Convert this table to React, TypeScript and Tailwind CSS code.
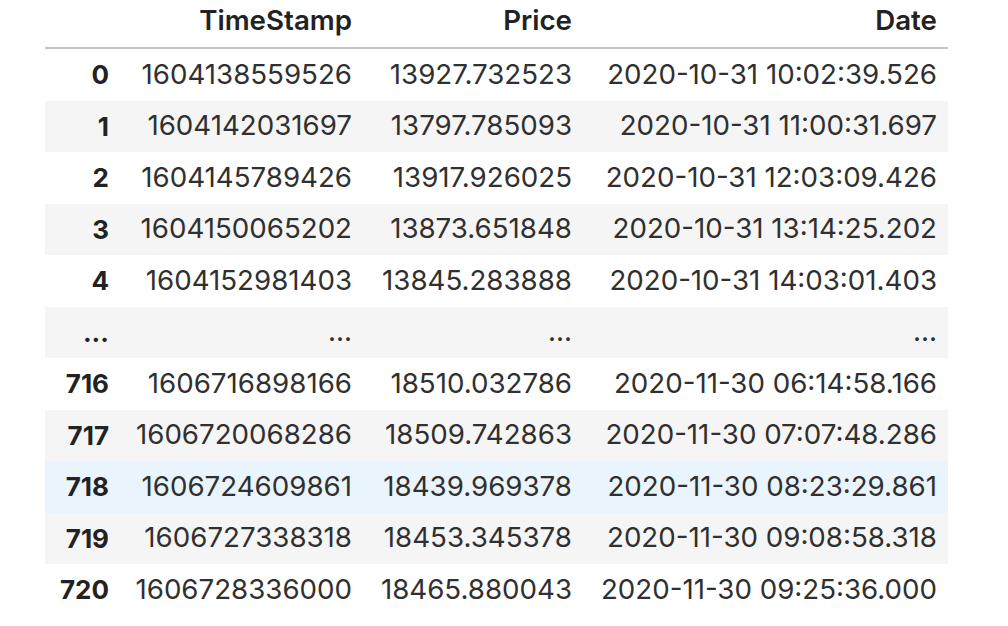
const ROWS = [
  { idx: "0", ts: "1604138559526", price: "13927.732523", date: "2020-10-31 10:02:39.526" },
  { idx: "1", ts: "1604142031697", price: "13797.785093", date: "2020-10-31 11:00:31.697" },
  { idx: "2", ts: "1604145789426", price: "13917.926025", date: "2020-10-31 12:03:09.426" },
  { idx: "3", ts: "1604150065202", price: "13873.651848", date: "2020-10-31 13:14:25.202" },
  { idx: "4", ts: "1604152981403", price: "13845.283888", date: "2020-10-31 14:03:01.403" },
  { idx: "...", ts: "...", price: "...", date: "..." },
  { idx: "716", ts: "1606716898166", price: "18510.032786", date: "2020-11-30 06:14:58.166" },
  { idx: "717", ts: "1606720068286", price: "18509.742863", date: "2020-11-30 07:07:48.286" },
  { idx: "718", ts: "1606724609861", price: "18439.969378", date: "2020-11-30 08:23:29.861" },
  { idx: "719", ts: "1606727338318", price: "18453.345378", date: "2020-11-30 09:08:58.318" },
  { idx: "720", ts: "1606728336000", price: "18465.880043", date: "2020-11-30 09:25:36.000" },
];

const COLS = "grid grid-cols-[75px_243px_220px_365px]";

export default function App() {
  return (
    <div className="w-[1008px] h-[626px] overflow-hidden bg-white font-['Inter',sans-serif] text-[27.7px] text-[#303030]">
      <div className="ml-[45px] w-[903px]">
        <div className={`${COLS} h-[49px] border-b-2 border-[#c4c4c4] font-semibold text-[#222] items-center`}>
          <div />
          <div className="text-right pr-[11px] pb-[6px]">TimeStamp</div>
          <div className="text-right pr-[11px] pb-[6px]">Price</div>
          <div className="text-right pr-[11px] pb-[6px]">Date</div>
        </div>
        {ROWS.map((r, i) => {
          const bg = r.idx === "718" ? "bg-[#e9f4fc]" : i % 2 === 1 ? "bg-[#f5f5f5]" : "bg-white";
          return (
            <div key={r.idx} className={`${COLS} h-[51.5px] items-center ${bg}`}>
              <div className="text-right pr-[11px] text-[26px] font-bold text-[#222]">{r.idx}</div>
              <div className="text-right pr-[11px]">{r.ts}</div>
              <div className="text-right pr-[11px]">{r.price}</div>
              <div className="text-right pr-[11px]">{r.date}</div>
            </div>
          );
        })}
      </div>
    </div>
  );
}
